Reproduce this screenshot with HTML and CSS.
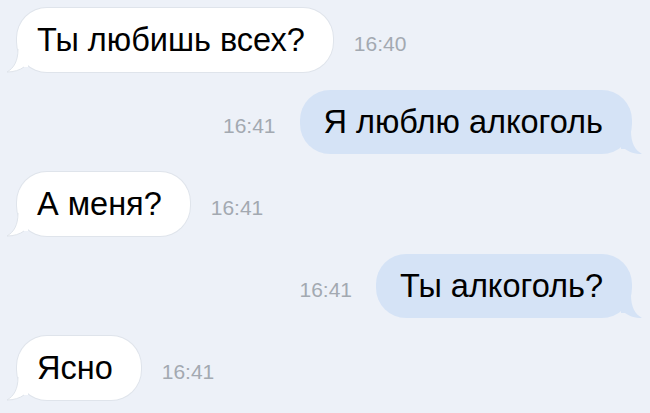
FILE: index.html
```html
<!DOCTYPE html>
<html lang="ru">
<head>
  <meta charset="UTF-8" />
  <meta name="viewport" content="width=device-width, initial-scale=1" />
  <title>Диалог</title>
  <link rel="stylesheet" href="styles.css">
</head>
<body>
  <main class="chat">
    <div class="row in">
      <div class="bubble">
        Ты любишь всех?
        <svg class="tail" width="22" height="24" viewBox="0 0 22 24"><path d="M12 0 C12 12 8 19 1 23 C8 23 14 21 18 18 L22 18 L22 0 Z" /><path class="edge" d="M12 0 C12 12 8 19 1 23 C8 23 14 21 18 18" /></svg>
      </div>
      <span class="time">16:40</span>
    </div>

    <div class="row out">
      <span class="time">16:41</span>
      <div class="bubble">
        Я люблю алкоголь
        <svg class="tail" width="22" height="24" viewBox="0 0 22 24"><path d="M10 0 C10 12 14 19 21 23 C14 23 8 21 4 18 L0 18 L0 0 Z" /></svg>
      </div>
    </div>

    <div class="row in">
      <div class="bubble">
        А меня?
        <svg class="tail" width="22" height="24" viewBox="0 0 22 24"><path d="M12 0 C12 12 8 19 1 23 C8 23 14 21 18 18 L22 18 L22 0 Z" /><path class="edge" d="M12 0 C12 12 8 19 1 23 C8 23 14 21 18 18" /></svg>
      </div>
      <span class="time">16:41</span>
    </div>

    <div class="row out">
      <span class="time">16:41</span>
      <div class="bubble">
        Ты алкоголь?
        <svg class="tail" width="22" height="24" viewBox="0 0 22 24"><path d="M10 0 C10 12 14 19 21 23 C14 23 8 21 4 18 L0 18 L0 0 Z" /></svg>
      </div>
    </div>

    <div class="row in">
      <div class="bubble">
        Ясно
        <svg class="tail" width="22" height="24" viewBox="0 0 22 24"><path d="M12 0 C12 12 8 19 1 23 C8 23 14 21 18 18 L22 18 L22 0 Z" /><path class="edge" d="M12 0 C12 12 8 19 1 23 C8 23 14 21 18 18" /></svg>
      </div>
      <span class="time">16:41</span>
    </div>
  </main>
</body>
</html>
```

FILE: styles.css
```css
html, body {
  margin: 0;
  padding: 0;
}
body {
  background-color: #edf1f8;
  font-family: "Liberation Sans", Arial, sans-serif;
  color: #000;
  width: 650px;
  height: 413px;
  overflow: hidden;
}
.chat {
  display: flex;
  flex-direction: column;
  gap: 18px;
  padding: 8px 18px 0 17px;
}
.row {
  display: flex;
  align-items: center;
}
.row.in {
  justify-content: flex-start;
  gap: 21px;
}
.row.out {
  justify-content: flex-end;
  gap: 24px;
}
.bubble {
  position: relative;
  font-size: 32.5px;
  line-height: 36px;
  padding: 14px 28px 14px 20px;
  border-radius: 30px;
  white-space: nowrap;
}
.in .bubble {
  background: #fff;
  box-shadow: 0 0 0 1px #dfe4eb;
}
.out .bubble {
  background: #d5e3f6;
  padding: 14px 29px 14px 24px;
}
.time {
  font-size: 21px;
  color: #a3a9b1;
  padding-top: 8px;
}
.tail {
  position: absolute;
  bottom: -1px;
}
.in .tail {
  left: -11px;
  fill: #fff;
}
.in .tail .edge {
  fill: none;
  stroke: #dfe4eb;
  stroke-width: 1;
}
.out .tail {
  right: -11px;
  fill: #d5e3f6;
}
```
